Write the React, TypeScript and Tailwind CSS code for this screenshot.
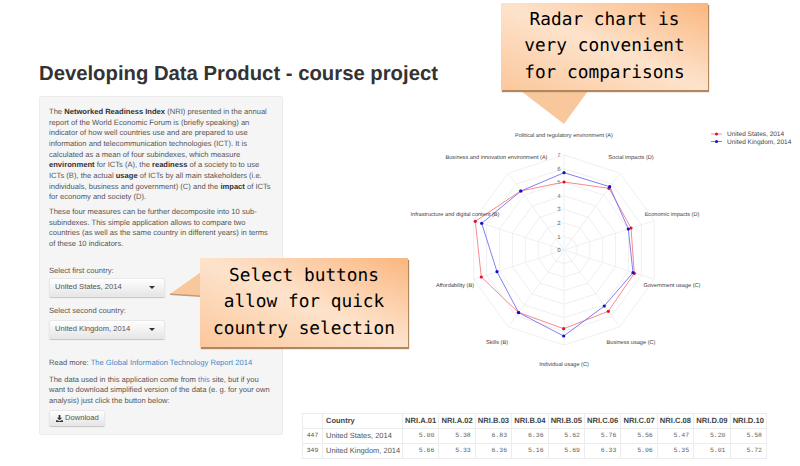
import React from 'react';

const cx = 165;
const cy = 130;
const unit = 13.57;
const labels: [string, number, number][] = [
  ['Political and regulatory environment (A)', 165, 17],
  ['Social impacts (D)', 232, 39],
  ['Economic impacts (D)', 273, 96],
  ['Government usage (C)', 273, 167],
  ['Business usage (C)', 232, 224],
  ['Individual usage (C)', 165, 246],
  ['Skills (B)', 98, 224],
  ['Affordability (B)', 56, 167],
  ['Infrastructure and digital content (B)', 56, 96],
  ['Business and innovation environment (A)', 97.5, 39],
];

const redPts = [[165, 62], [210, 68.3], [232, 108], [235.3, 153.3], [209.3, 191.3], [164.7, 208.7], [119.3, 192.3], [82.3, 157], [76.3, 101.3], [121.5, 71]];
const bluePts = [[165, 52.7], [210.7, 66.7], [229.3, 109], [234, 152.7], [205.3, 186], [164.7, 216], [119.7, 192.7], [98, 151.7], [82.7, 103.3], [122, 71]];

const ring = (r: number) =>
  Array.from({ length: 10 }, (_, i) => {
    const a = (i * Math.PI) / 5;
    return `${(cx + r * Math.sin(a)).toFixed(1)},${(cy - r * Math.cos(a)).toFixed(1)}`;
  }).join(' ');

const toLine = (pts: number[][]) => pts.map((p) => p.join(',')).join(' ');

function RadarChart() {
  return (
    <svg width="400" height="260" viewBox="0 0 400 260" className="block" style={{ fontFamily: '"Liberation Sans", Arial, sans-serif' }}>
      {[1, 2, 3, 4, 5, 6, 7].map((v) => (
        <polygon key={v} points={ring(v * unit)} fill="none" stroke="#f0f0f0" strokeWidth="1" />
      ))}
      {Array.from({ length: 10 }, (_, i) => {
        const a = (i * Math.PI) / 5;
        return (
          <line key={i} x1={cx} y1={cy} x2={cx + 95 * Math.sin(a)} y2={cy - 95 * Math.cos(a)} stroke="#f0f0f0" strokeWidth="1" />
        );
      })}
      {[0, 1, 2, 3, 4, 5, 6, 7].map((v) => (
        <text key={v} x={cx - 5} y={cy - v * unit + 2.2} fontSize="6" fill="#666" textAnchor="middle">
          {v}
        </text>
      ))}
      <polygon points={toLine(redPts)} fill="none" stroke="#f78b8e" strokeWidth="1" />
      {redPts.map((p, i) => (
        <circle key={i} cx={p[0]} cy={p[1]} r="1.6" fill="#e0102a" />
      ))}
      <polygon points={toLine(bluePts)} fill="none" stroke="#8080f4" strokeWidth="1" />
      {bluePts.map((p, i) => (
        <circle key={i} cx={p[0]} cy={p[1]} r="1.6" fill="#1010c8" />
      ))}
      {labels.map(([t, x, y]) => (
        <text key={t} x={x} y={y} fontSize="5.6" fill="#444" textAnchor="middle">
          {t}
        </text>
      ))}
      <line x1="312" y1="14" x2="323" y2="14" stroke="#f78b8e" />
      <circle cx="317.5" cy="14" r="1.5" fill="#e0102a" />
      <text x="328" y="16" fontSize="6.5" fill="#444">United States, 2014</text>
      <line x1="312" y1="21.5" x2="323" y2="21.5" stroke="#8080f4" />
      <circle cx="317.5" cy="21.5" r="1.5" fill="#1010c8" />
      <text x="328" y="23.5" fontSize="6.5" fill="#444">United Kingdom, 2014</text>
    </svg>
  );
}

function SelectButton({ label }: { label: string }) {
  return (
    <button className="flex items-center justify-between w-[116px] h-[19px] pl-[5px] pr-[9px] rounded-[2px] border border-[#e8e8e8] bg-gradient-to-b from-white to-[#e6e6e6] shadow-[0_1px_1px_rgba(0,0,0,0.2)] text-[7.6px] text-[#555]">
      <span>{label}</span>
      <span className="w-0 h-0 border-x-[3px] border-x-transparent border-t-[3px] border-t-[#333]" />
    </button>
  );
}

const headers = ['NRI.A.01', 'NRI.A.02', 'NRI.B.03', 'NRI.B.04', 'NRI.B.05', 'NRI.C.06', 'NRI.C.07', 'NRI.C.08', 'NRI.D.09', 'NRI.D.10'];
const rows = [
  { id: '447', name: 'United States, 2014', vals: ['5.00', '5.38', '6.83', '6.36', '5.62', '5.76', '5.56', '5.47', '5.20', '5.58'] },
  { id: '349', name: 'United Kingdom, 2014', vals: ['5.66', '5.33', '6.36', '5.16', '5.69', '6.33', '5.06', '5.35', '5.01', '5.72'] },
];

function DataTable() {
  return (
    <table className="border-collapse table-fixed w-[465px] text-[7.5px] text-[#555]">
      <thead>
        <tr className="h-[15px]">
          <th className="w-[20px] border border-[#ececec]" />
          <th className="w-[80px] border border-[#ececec] px-[3px] text-left font-bold text-[#444]">Country</th>
          {headers.map((h) => (
            <th key={h} className="border border-[#ececec] text-center font-bold text-[#444] text-[7.6px]">{h}</th>
          ))}
        </tr>
      </thead>
      <tbody>
        {rows.map((r) => (
          <tr key={r.id} className="h-[15px]">
            <td className="border border-[#ececec] text-center text-[6.4px] font-['Liberation_Mono',monospace]">{r.id}</td>
            <td className="border border-[#ececec] px-[3px] whitespace-nowrap">{r.name}</td>
            {r.vals.map((v, i) => (
              <td key={i} className="border border-[#ececec] pr-[4px] text-right font-['Liberation_Mono',monospace] text-[6.5px] text-[#666]">{v}</td>
            ))}
          </tr>
        ))}
      </tbody>
    </table>
  );
}

export default function App() {
  return (
    <div className="relative w-[800px] h-[466px] overflow-hidden bg-white font-['Liberation_Sans',Arial,sans-serif] [text-rendering:geometricPrecision]">
      <div className="flex">
        <div className="ml-[39px] w-[244px] pt-[62px]">
          <h1 className="text-[20.3px] leading-[24px] font-bold text-[#333] whitespace-nowrap">Developing Data Product - course project</h1>
          <div className="mt-[10px] h-[339px] rounded-[2px] border border-[#ececec] bg-[#f5f5f5] px-[9px] pt-[10px] text-[7.6px] leading-[10.65px] text-[#555]">
            <p>
              The <b className="text-[#333]">Networked Readiness Index</b> (NRI) presented in the annual report of the World Economic Forum is (briefly speaking) an indicator of how well countries use and are prepared to use information and telecommunication technologies (ICT). It is calculated as a mean of four subindexes, which measure <b className="text-[#333]">environment</b> for ICTs (A), the <b className="text-[#333]">readiness</b> of a society to to use ICTs (B), the actual <b className="text-[#333]">usage</b> of ICTs by all main stakeholders (i.e. individuals, business and government) (C) and the <b className="text-[#333]">impact</b> of ICTs for economy and society (D).
            </p>
            <p className="mt-[4px]">
              These four measures can be further decomposite into 10 sub-subindexes. This simple application allows to compare two countries (as well as the same country in different years) in terms of these 10 indicators.
            </p>
            <p className="mt-[16px]">Select first country:</p>
            <div className="mt-[2px]"><SelectButton label="United States, 2014" /></div>
            <p className="mt-[9px]">Select second country:</p>
            <div className="mt-[3px]"><SelectButton label="United Kingdom, 2014" /></div>
            <p className="mt-[19px]">
              Read more: <span className="text-[#3b8ccb]">The Global Information Technology Report 2014</span>
            </p>
            <p className="mt-[6px]">
              The data used in this application come from <span className="text-[#3b8ccb]">this</span> site, but if you want to download simplified version of the data (e. g. for your own analysis) just click the button below:
            </p>
            <button className="mt-[4px] flex items-center gap-[2px] w-[56px] h-[16px] px-[6px] rounded-[2px] border border-[#e8e8e8] bg-gradient-to-b from-white to-[#e6e6e6] shadow-[0_1px_1px_rgba(0,0,0,0.2)] text-[7.6px] text-[#555]">
              <svg width="7" height="7" viewBox="0 0 8 8" className="shrink-0">
                <path d="M3 0h2v3h2L4 6 1 3h2z M0 6h1.5L4 7l2.5-1H8v2H0z" fill="#333" />
              </svg>
              Download
            </button>
          </div>
        </div>
        <div className="ml-[19px] flex-1">
          <div className="ml-[97px] mt-[120px]">
            <RadarChart />
          </div>
          <div className="mt-[33px]">
            <DataTable />
          </div>
        </div>
      </div>

      <div className="absolute left-[170px] top-[258px] w-[238px] h-[91px]">
        <svg className="absolute left-0 top-[12px]" width="32" height="40" viewBox="0 0 32 40">
          <polygon points="31,2 0,24 31,26" fill="#f9c79c" />
          <polygon points="0,23.5 31,25.5 31,27 0,25" fill="#c49a75" />
        </svg>
        <div className="absolute left-[30px] top-0 w-[208px] h-[89px] flex flex-col items-center justify-center bg-gradient-to-bl from-[#fab67e] via-[#fde3cc] to-[#fbc79b] shadow-[1px_2px_1px_#b0875f] font-['DejaVu_Sans_Mono',monospace] text-[17.8px] leading-[26.3px] text-black">
          <div>Select buttons</div>
          <div>allow for quick</div>
          <div>country selection</div>
        </div>
      </div>

      <div className="absolute left-[501px] top-[3px] w-[209px] h-[122px]">
        <svg className="absolute left-0 top-[86px]" width="100" height="36" viewBox="0 0 100 36">
          <polygon points="20,2 87,2 63,35" fill="#f9c79c" />
        </svg>
        <div className="absolute left-0 top-0 w-[207px] h-[87px] flex flex-col items-center justify-center bg-gradient-to-bl from-[#fab67e] via-[#fde3cc] to-[#fbc79b] shadow-[1px_2px_1px_#b0875f] font-['DejaVu_Sans_Mono',monospace] text-[17.8px] leading-[26.3px] text-black">
          <div>Radar chart is</div>
          <div>very convenient</div>
          <div>for comparisons</div>
        </div>
      </div>
    </div>
  );
}
